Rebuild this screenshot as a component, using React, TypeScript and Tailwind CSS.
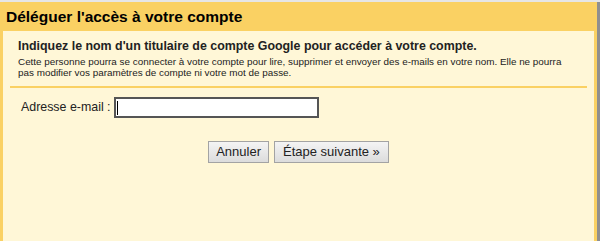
export default function App() {
  return (
    <div className="flex h-[241px] w-[600px] bg-[#e6e6e6] pt-[2px] font-['Liberation_Sans',Arial,sans-serif] text-[#222]">
      <div className="flex flex-1 flex-col bg-[#fad163] px-[3px]">
        <div className="flex h-[29px] items-center pl-[3px] text-[15.5px] font-bold text-black">
          Déléguer l'accès à votre compte
        </div>
        <div className="flex flex-1 flex-col bg-[#fff7d7]">
          <div className="mx-[7px] border-b-2 border-[#fad163] px-[8px] pb-[8px] pt-[8px]">
            <div className="text-[12.4px] font-bold leading-[15px]">
              Indiquez le nom d'un titulaire de compte Google pour accéder à votre compte.
            </div>
            <div className="mt-[2px] text-[9.9px] leading-[11px]">
              Cette personne pourra se connecter à votre compte pour lire, supprimer et envoyer des e-mails en votre nom. Elle ne pourra
              <br />
              pas modifier vos paramètres de compte ni votre mot de passe.
            </div>
          </div>
          <div className="mt-[9px] flex items-center pl-[18px]">
            <label className="w-[93px] text-[12.4px] text-[#222]">Adresse e-mail :</label>
            <div className="flex h-[21px] w-[205px] items-center border-2 border-[#555] bg-white px-[1px]">
              <div className="h-[14px] w-px bg-black" />
            </div>
          </div>
          <div className="mt-[23px] flex justify-center gap-[5px]">
            <button className="h-[22px] border border-[#a3a3a3] bg-gradient-to-b from-[#f4f4f4] to-[#dcdcdc] px-[7px] text-[13px] text-[#222]">
              Annuler
            </button>
            <button className="h-[22px] border border-[#a3a3a3] bg-gradient-to-b from-[#f4f4f4] to-[#dcdcdc] px-[8px] text-[13px] text-[#222]">
              Étape suivante »
            </button>
          </div>
        </div>
      </div>
      <div className="w-[3px] bg-[#8f8f8f]" />
    </div>
  );
}
